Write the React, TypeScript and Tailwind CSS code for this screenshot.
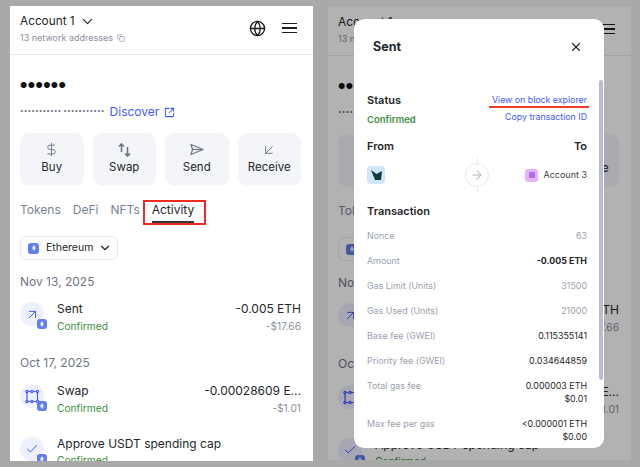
import React from 'react';
import {
  ArrowDownLeft,
  ArrowRight,
  ArrowUpRight,
  Check,
  ChevronDown,
  Copy,
  DollarSign,
  Globe,
  SquareArrowOutUpRight,
  X,
} from 'lucide-react';

const SwapArrows = () => (
  <svg width="17" height="17" viewBox="0 0 17 17" fill="none" stroke="currentColor" strokeWidth="1.6">
    <path d="M5.5 11V3M3 5.5 5.5 3 8 5.5" />
    <path d="M11.5 6v9M9 12.5 11.5 15 14 12.5" />
  </svg>
);

const SendIcon = () => (
  <svg width="17" height="17" viewBox="0 0 17 17" fill="none" stroke="currentColor" strokeWidth="1.2" strokeLinejoin="round">
    <path d="M3 3.5 15 8.5 3 13.5 4.5 8.5Z" />
    <path d="M4.5 8.5H15" />
  </svg>
);

const BridgeIcon = () => (
  <svg width="15" height="15" viewBox="0 0 15 15" fill="none" stroke="currentColor" strokeWidth="1.2">
    <circle cx="2" cy="2.5" r="1.1" />
    <circle cx="7" cy="2.5" r="1.1" />
    <circle cx="12.5" cy="2.5" r="1.1" />
    <circle cx="2" cy="12.5" r="1.1" />
    <circle cx="7" cy="12.5" r="1.1" />
    <circle cx="12.5" cy="12.5" r="1.1" />
    <path d="M3.2 2.5h2.6M8.2 2.5h3M2 3.7v7.6M12.5 3.7v7.6M3.2 12.5h2.6M8.2 12.5h3" />
  </svg>
);

const EthBadge = ({ size = 'w-[10px] h-[10px]' }: { size?: string }) => (
  <span className={`${size} rounded-[3px] bg-[#627eea] flex items-center justify-center`}>
    <svg width="4" height="6" viewBox="0 0 4 6" fill="#dfe5fb">
      <path d="M2 0 4 3 2 6 0 3Z" />
    </svg>
  </span>
);

const actions = [
  { label: 'Buy', icon: <DollarSign size={15} strokeWidth={1.5} /> },
  { label: 'Swap', icon: <SwapArrows /> },
  { label: 'Send', icon: <SendIcon /> },
  { label: 'Receive', icon: <ArrowDownLeft size={16} strokeWidth={1.4} /> },
];

const ActivityRow = ({
  icon,
  title,
  amount,
  fiat,
  className,
}: {
  icon: React.ReactNode;
  title: string;
  amount?: string;
  fiat?: string;
  className?: string;
}) => (
  <div className={`flex items-start ${className ?? ''}`}>
    <div className="relative w-[24px] h-[24px] rounded-full bg-[#eef0ff] text-[#4459ff] flex items-center justify-center mt-[2px] shrink-0">
      {icon}
      <span className="absolute left-[17px] top-[17px]">
        <EthBadge />
      </span>
    </div>
    <div className="ml-[13px] flex-1 min-w-0">
      <div className="flex justify-between text-[12px] leading-[17px] text-[#24272a]">
        <span>{title}</span>
        {amount && <span>{amount}</span>}
      </div>
      <div className="flex justify-between text-[10.2px] leading-[17px] mt-[0.5px]">
        <span className="text-[#3f8f45]">Confirmed</span>
        {fiat && <span className="text-[#8a8f9e]">{fiat}</span>}
      </div>
    </div>
  </div>
);

const WalletPanel = () => (
  <div className="w-[303px] h-full bg-white overflow-hidden">
    <div className="h-[49px] border-b border-[#e6e8ea] pl-[10px] pr-[12px] pt-[7px] flex justify-between">
      <div>
        <div className="flex items-center text-[11.8px] leading-[17px] text-[#24272a]">
          Account 1
          <ChevronDown size={17} className="ml-[4px]" strokeWidth={1.7} />
        </div>
        <div className="flex items-center text-[9px] leading-[13px] mt-[1px] text-[#8a8f9e]">
          13 network addresses
          <Copy size={8} className="ml-[4px]" />
        </div>
      </div>
      <div className="flex items-center gap-[16px] mb-[11px] pr-[4px] text-[#1c1f22]">
        <Globe size={17} strokeWidth={1.9} />
        <div className="w-[15px] flex flex-col gap-[3px]">
          <div className="h-[1.5px] bg-[#1c1f22]" />
          <div className="h-[1.5px] bg-[#1c1f22]" />
          <div className="h-[1.5px] bg-[#1c1f22]" />
        </div>
      </div>
    </div>
    <div className="pl-[10px] pr-[12px]">
      <div className="text-[8px] leading-[14px] mt-[23px] tracking-[0.4px] text-[#111]">●●●●●●</div>
      <div className="flex items-center mt-[11px] h-[18px]">
        <span className="text-[#6f7585] text-[6.5px] tracking-[0.1px]">••••••••••• •••••••••••</span>
        <span className="ml-[5px] text-[12px] text-[#4459ff]">Discover</span>
        <SquareArrowOutUpRight size={11} className="ml-[5px] text-[#4459ff]" strokeWidth={2.2} />
      </div>
      <div className="grid grid-cols-4 gap-[9px] mt-[12px]">
        {actions.map(a => (
          <div key={a.label} className="h-[53px] rounded-[9px] bg-[#f3f5f9] flex flex-col items-center pt-[8px]">
            <span className="h-[17px] flex items-center text-[#6f7585]">{a.icon}</span>
            <span className="text-[11.5px] leading-[15px] mt-[2px] text-[#24272a]">{a.label}</span>
          </div>
        ))}
      </div>
      <div className="flex text-[12px] leading-[17px] mt-[15px] text-[#7b8194]">
        <span>Tokens</span>
        <span className="ml-[12px]">DeFi</span>
        <span className="ml-[12px]">NFTs</span>
        <span className="ml-[12px] text-[#24272a] border-b-2 border-[#33363a] pb-[3px]">Activity</span>
      </div>
      <div className="mt-[13px] w-[98px] h-[24px] border border-[#e6e8ea] rounded-[6px] flex items-center pl-[7px] text-[10.5px] text-[#24272a]">
        <EthBadge size="w-[11px] h-[11px]" />
        <span className="ml-[7px]">Ethereum</span>
        <ChevronDown size={14} className="ml-[5px]" strokeWidth={2} />
      </div>
      <div className="text-[12px] leading-[17px] mt-[13px] text-[#6f7585]">Nov 13, 2025</div>
      <ActivityRow
        className="mt-[10px]"
        icon={<ArrowUpRight size={15} strokeWidth={1.6} />}
        title="Sent"
        amount="-0.005 ETH"
        fiat="-$17.66"
      />
      <div className="text-[12px] leading-[17px] mt-[19.5px] text-[#6f7585]">Oct 17, 2025</div>
      <ActivityRow
        className="mt-[11px]"
        icon={<BridgeIcon />}
        title="Swap"
        amount="-0.00028609 E..."
        fiat="-$1.01"
      />
      <ActivityRow
        className="mt-[18px]"
        icon={<Check size={14} strokeWidth={1.7} />}
        title="Approve USDT spending cap"
      />
    </div>
  </div>
);

const feeRows: { label: string; value: string[]; tone: string }[] = [
  { label: 'Nonce', value: ['63'], tone: 'text-[#9a9fae]' },
  { label: 'Amount', value: ['-0.005 ETH'], tone: 'font-bold text-[#24272a]' },
  { label: 'Gas Limit (Units)', value: ['31500'], tone: 'text-[#9a9fae]' },
  { label: 'Gas Used (Units)', value: ['21000'], tone: 'text-[#9a9fae]' },
  { label: 'Base fee (GWEI)', value: ['0.115355141'], tone: 'text-[#24272a]' },
  { label: 'Priority fee (GWEI)', value: ['0.034644859'], tone: 'text-[#24272a]' },
  { label: 'Total gas fee', value: ['0.000003 ETH', '$0.01'], tone: 'text-[#24272a]' },
  { label: 'Max fee per gas', value: ['<0.000001 ETH', '$0.00'], tone: 'text-[#24272a]' },
];

const SentModal = () => (
  <div className="absolute left-[26px] top-[12px] w-[250px] h-[429px] bg-white rounded-[10px] overflow-hidden">
    <div className="absolute right-[1px] top-[61px] w-[4px] h-[300px] rounded-full bg-[#b9bcd4]" />
    <div className="flex items-center justify-between pl-[19px] pr-[21px] pt-[20px] text-[#24272a]">
      <span className="text-[12.5px] leading-[16px] font-bold">Sent</span>
      <X size={14} strokeWidth={2} />
    </div>
    <div className="px-[13px] pr-[17px] mt-[38px]">
      <div className="relative flex justify-between text-[#24272a]">
        <div>
          <div className="text-[11px] leading-[14px] font-semibold">Status</div>
          <div className="text-[9.5px] leading-[14px] mt-[6px] font-semibold text-[#3f8f45]">Confirmed</div>
        </div>
        <div className="text-right text-[8.8px] leading-[14px] text-[#4459ff]">
          <div>View on block explorer</div>
          <div className="mt-[3px]">Copy transaction ID</div>
        </div>
        <div className="absolute right-[-2px] top-[13px] w-[100px] h-[2px] bg-[#f03a2a]" />
      </div>
      <div className="flex justify-between text-[11px] leading-[14px] font-semibold mt-[12px] text-[#24272a]">
        <span>From</span>
        <span>To</span>
      </div>
      <div className="relative flex items-center justify-between mt-[13px] h-[18px]">
        <div className="w-[18px] h-[18px] rounded-[4px] bg-[#cfe6ff] flex items-center justify-center">
          <svg width="11" height="10" viewBox="0 0 11 10" fill="#0f3b3a">
            <path d="M0 0 5.5 4 11 1 10 10H4Z" />
          </svg>
        </div>
        <div className="absolute left-[98px] top-[-8px] h-[34px] w-[24px] flex items-center justify-center">
          <div className="absolute left-[11.5px] top-0 h-full w-px bg-[#e6e8ea]" />
          <div className="relative w-[24px] h-[24px] rounded-full bg-white border border-[#e6e8ea] flex items-center justify-center text-[#b4b7c6]">
            <ArrowRight size={14} strokeWidth={1.8} />
          </div>
        </div>
        <div className="flex items-center text-[9px] text-[#3c4046]">
          <span className="w-[13px] h-[13px] rounded-[3px] bg-[#e3b3fb] flex items-center justify-center">
            <span className="w-[6px] h-[6px] rounded-[1px] bg-[#b56fe0]" />
          </span>
          <span className="ml-[5px]">Account 3</span>
        </div>
      </div>
      <div className="text-[11px] leading-[14px] font-semibold mt-[20px] text-[#24272a]">Transaction</div>
      <div className="mt-[11px] text-[8.9px] leading-[13px]">
        {feeRows.map(r => (
          <div key={r.label} className="flex justify-between mb-[12px]">
            <span className="text-[#9a9fae]">{r.label}</span>
            <div className={`text-right ${r.tone}`}>
              {r.value.map(v => (
                <div key={v}>{v}</div>
              ))}
            </div>
          </div>
        ))}
      </div>
    </div>
  </div>
);

const App: React.FC = () => {
  return (
    <div className="w-[640px] h-[467px] bg-[#a9a9a9] overflow-hidden flex font-['Inter',sans-serif]">
      <div className="relative ml-[10px] mt-[6px] h-[455px] shrink-0">
        <WalletPanel />
        {/* red highlight round the selected tab */}
        <div className="absolute left-[133px] top-[194px] w-[63px] h-[25px] border-2 border-[#ee2a24]" />
      </div>
      <div className="relative ml-[15px] mt-[7px] h-[453px] shrink-0">
        <WalletPanel />
        <div className="absolute inset-0 bg-black/30" />
        <SentModal />
      </div>
    </div>
  );
};

export default App;
